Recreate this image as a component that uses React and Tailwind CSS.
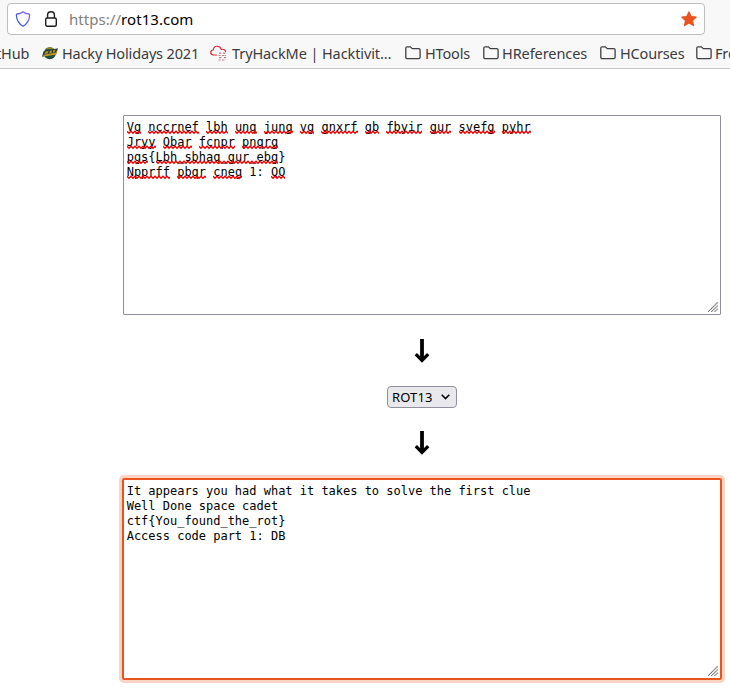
import React from "react";

const UI = "font-['Noto_Sans',sans-serif]";

function Folder() {
  return (
    <svg className="block h-[14px] w-[16px] shrink-0" viewBox="0 0 16 14" fill="none" stroke="#3f3f44" strokeWidth="1.3">
      <path d="M.8 11.2V2.2Q.8.8 2.2.8H5.4L7.3 2.6H13.7Q15.1 2.6 15.1 4V11.2Q15.1 12.6 13.7 12.6H2.2Q.8 12.6.8 11.2Z" />
    </svg>
  );
}

function Label({ children, className }) {
  return <span className={`block shrink-0 whitespace-nowrap ${className}`}>{children}</span>;
}

function Misspelled({ children }) {
  const width = children.length * 7.21;
  let d = "M0 1.2";
  for (let x = 0, i = 0; x < width; x += 2, i++) d += `L${x + 2} ${i % 2 ? 1.2 : 3.2}`;
  return (
    <span className="relative inline-block h-[15px] align-top">
      {children}
      <svg className="absolute top-[10px] left-0 h-[5px] overflow-hidden" style={{ width }} fill="none" stroke="#f00000" strokeWidth="1.4">
        <path d={d} />
      </svg>
    </span>
  );
}

function Grip() {
  return (
    <svg className="block h-[10px] w-[10px]" viewBox="0 0 10 10" stroke="#666" strokeWidth="1.2" strokeDasharray="1.1 .4">
      <path d="M0 10L10 0M3.3 10L10 3.3M6.6 10L10 6.6" />
    </svg>
  );
}

function Arrow() {
  return (
    <svg className="block h-[24px] w-[16px]" viewBox="0 0 16 24" fill="none" stroke="#000">
      <path d="M8 0V21" strokeWidth="3.8" />
      <path d="M1.8 15.2L8 21.4L14.2 15.2" strokeWidth="3.3" />
    </svg>
  );
}

const SPELL = /([A-Za-z_]+)/;
const cipher = [
  "Vg nccrnef lbh unq jung vg gnxrf gb fbyir gur svefg pyhr",
  "Jryy Qbar fcnpr pnqrg",
  "pgs{Lbh_sbhaq_gur_ebg}",
  "Npprff pbqr cneg 1: QO",
];
const plain = [
  "It appears you had what it takes to solve the first clue",
  "Well Done space cadet",
  "ctf{You_found_the_rot}",
  "Access code part 1: DB",
];

export default function App() {
  return (
    <div className="h-[690px] w-[730px] overflow-hidden bg-white text-black">
      <header className={`h-[69px] overflow-hidden border-b border-[#c4c4c4] bg-[#f8f8f8] pt-[3px] ${UI}`}>
        <div className="ml-[7px] flex h-[32px] w-[698px] items-center rounded-[4px] border border-[#bebebe] bg-white pr-[7px] pl-[7px]">
          <svg className="block h-[16px] w-[16px]" viewBox="0 0 16 16" fill="none" strokeWidth="1.3">
            <defs>
              <linearGradient id="shield" x1="0" y1="1" x2="1" y2="0">
                <stop offset="0" stopColor="#2858d8" />
                <stop offset="1" stopColor="#9060f8" />
              </linearGradient>
            </defs>
            <path stroke="url(#shield)" strokeLinejoin="round" d="M8 .8Q10.5 2.8 13.8 3Q14.7 3.1 14.6 4.2Q14.3 11.5 8 15.2Q1.7 11.5 1.4 4.2Q1.3 3.1 2.2 3Q5.5 2.8 8 .8Z" />
          </svg>
          <svg className="ml-[14px] block h-[16px] w-[12px]" viewBox="0 0 12 16" fill="none" stroke="#1c1c20" strokeWidth="1.4">
            <rect x=".7" y="7" width="10.6" height="8.2" rx="1.5" />
            <path d="M2.6 7V4.2a3.4 3.4 0 0 1 6.8 0V7" />
          </svg>
          <Label className="ml-[12px] text-[15px] leading-[20px] tracking-[0.05px]">
            <span className="text-[#808080]">https://</span>rot13.com
          </Label>
          <svg className="ml-auto block h-[16px] w-[16px]" viewBox="0 0 16 16" fill="#e95420" stroke="#e95420" strokeWidth="1.2" strokeLinejoin="round">
            <path d="M8 .9L10.2 5.5L15.2 6.1L11.5 9.6L12.5 14.6L8 12.1L3.5 14.6L4.5 9.6L.8 6.1L5.8 5.5Z" />
          </svg>
        </div>
        <nav className="mt-[7px] flex h-[22px] items-center text-[14.5px] leading-[22px] tracking-[-0.16px] text-[#3b3b40]">
          <Label className="-ml-[4px] w-[34px]">tHub</Label>
          <svg className="ml-[12px] block h-[14px] w-[16px] shrink-0" viewBox="0 0 16 14">
            <circle cx="7.8" cy="7.2" r="6" fill="#1d4e43" />
            <path d="M3 3.2Q8-.8 12.6 3.2Z" fill="#8b8428" />
            <path d="M0 10.8L1.6 5.2L16 2.2L14.2 8Z" fill="#293e35" />
            <path d="M.4 10.8L2 8.8L14 6.4L15.8 2.6L14.4 8.4Z" fill="#c19b21" />
            <path d="M2.6 8L3.8 5.6L6.4 5.2L5.6 7.4ZM7 7.2L8 4.8L10 4.6L9.4 6.8ZM10.8 6.4L11.4 4.2L13.4 3.8L12.6 6Z" fill="#c19b21" />
          </svg>
          <Label className="ml-[4px] w-[136px]">Hacky Holidays 2021</Label>
          <svg className="ml-[12px] block h-[16px] w-[17px] shrink-0" viewBox="0 0 17 16" fill="none" stroke="#d22b35" strokeWidth="1.2">
            <path d="M7 10H3.5C-.2 9.7 0 5.2 3.2 5C3.7.2 10 .1 11.2 4.3C14.3 3.9 16 5.4 15.5 7.2" />
            <path d="M9 8.2h3M13 8.2h3M8.5 10.5h2M12 10.5h4M9 12.7h3M14 12.7h2M8.5 15h2M12 15h3" stroke="#bd7e86" strokeDasharray="2 .6" />
          </svg>
          <Label className="ml-[5px] w-[160px] tracking-[-0.1px]">TryHackMe | Hacktivit…</Label>
          <span className="ml-[13px]"><Folder /></span>
          <Label className="ml-[4px] w-[46px]">HTools</Label>
          <span className="ml-[12px]"><Folder /></span>
          <Label className="ml-[3px] w-[86px] tracking-[-0.08px]">HReferences</Label>
          <span className="ml-[12px]"><Folder /></span>
          <Label className="ml-[4px] w-[64px]">HCourses</Label>
          <span className="ml-[12px]"><Folder /></span>
          <Label className="ml-[3px]">From</Label>
        </nav>
      </header>
      <main className="ml-[123px] flex w-[598px] flex-col items-center pt-[46px]">
        <div className="relative h-[200px] w-full rounded-[1px] border border-[#8f8f9d] px-[3px] pt-[4px] font-['DejaVu_Sans_Mono',monospace] text-[12px] leading-[15px] tracking-[-0.014px]">
          {cipher.map((line) => (
            <div key={line} className="-ml-[0.3px] h-[15px] whitespace-pre">
              {line.split(SPELL).map((part, i) => (i % 2 ? <Misspelled key={i}>{part}</Misspelled> : part))}
            </div>
          ))}
          <div className="absolute right-[2px] bottom-[2px]"><Grip /></div>
        </div>
        <div className="mt-[24px] -ml-[1px]"><Arrow /></div>
        <div className={`mt-[23px] flex h-[22px] w-[70px] items-center justify-between rounded-[4px] border border-[#8f8f9d] bg-[#e9e9ed] pr-[6px] pl-[4px] text-[13px] leading-[20px] tracking-[0.1px] ${UI}`}>
          <Label className="">ROT13</Label>
          <svg className="block h-[6px] w-[9px]" viewBox="0 0 9 6" fill="none" stroke="#000" strokeWidth="1.5">
            <path d="M.7.8L4.5 4.6L8.3.8" />
          </svg>
        </div>
        <div className="mt-[23px] -ml-[1px]"><Arrow /></div>
        <div className="relative mt-[23px] h-[202px] w-[600px] rounded-[2px] border-2 border-[#e95420] px-[3px] pt-[4px] font-['DejaVu_Sans_Mono',monospace] text-[12px] leading-[15px] tracking-[-0.014px] shadow-[0_0_0_3px_#fbd4c6]">
          {plain.map((line) => (
            <div key={line} className="-ml-[0.3px] h-[15px] whitespace-pre">{line}</div>
          ))}
          <div className="absolute right-[2px] bottom-[2px]"><Grip /></div>
        </div>
      </main>
    </div>
  );
}
